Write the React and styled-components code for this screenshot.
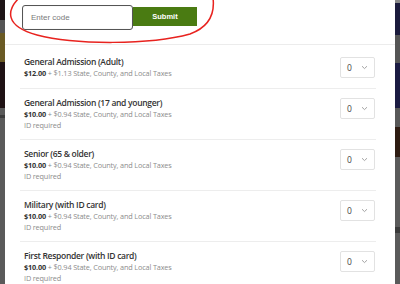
import styled, { createGlobalStyle } from "styled-components";

const GlobalStyle = createGlobalStyle`
  html, body {
    margin: 0;
    padding: 0;
    width: 400px;
    height: 284px;
    overflow: hidden;
    font-family: "Open Sans", "Liberation Sans", sans-serif;
  }
`;

const Page = styled.div`
  display: flex;
  width: 400px;
  height: 284px;
  background: #585858;
`;

const Backdrop = styled.div`
  width: 5px;
  flex-shrink: 0;
  background: ${(p) => p.$bands};
`;

const Modal = styled.div`
  position: relative;
  flex: 1;
  background: #fff;
  overflow: hidden;
`;

const CodeBar = styled.div`
  display: flex;
  align-items: flex-start;
  height: 39px;
  padding: 5px 0 0 17px;
  border-bottom: 1px solid #ececec;
`;

const CodeInput = styled.div`
  box-sizing: border-box;
  width: 111px;
  height: 25px;
  border: 1.5px solid #555;
  border-radius: 3px;
  display: flex;
  align-items: center;
  padding-left: 8px;
  font-family: "Liberation Sans", Arial, sans-serif;
  font-size: 8px;
  color: #7a7a7a;
  box-shadow: inset 0 0 1px rgba(0, 0, 0, 0.2);
`;

const SubmitButton = styled.div`
  width: 64px;
  height: 19px;
  margin-top: 2px;
  background: #4a7b12;
  color: #fff;
  font-family: "Liberation Sans", Arial, sans-serif;
  font-size: 7.5px;
  font-weight: 700;
  display: flex;
  align-items: center;
  justify-content: center;
`;

const Annotation = styled.svg`
  position: absolute;
  left: 0;
  top: 0;
  pointer-events: none;
`;

const List = styled.div`
  margin: 0 19px 0 15px;
  padding-top: 3px;
`;

const Row = styled.div`
  display: flex;
  align-items: flex-start;
  justify-content: space-between;
  padding: 7px 1px 9px 4px;
  border-bottom: 1px solid #ededed;
`;

const Info = styled.div`
  display: flex;
  flex-direction: column;
`;

const Title = styled.div`
  font-size: 8.5px;
  font-weight: 600;
  letter-spacing: -0.3px;
  color: #333;
  line-height: 13px;
`;

const Price = styled.div`
  font-size: 7.3px;
  letter-spacing: -0.15px;
  color: #8c8c8c;
  line-height: 11px;

  b {
    color: #333;
    font-weight: 700;
  }
`;

const Note = styled.div`
  font-size: 7.3px;
  letter-spacing: -0.15px;
  color: #8c8c8c;
  line-height: 10px;
`;

const Select = styled.div`
  box-sizing: border-box;
  width: 35px;
  height: 21px;
  margin-top: 2px;
  border: 1px solid #e2e2e2;
  border-radius: 2px;
  display: flex;
  align-items: center;
  justify-content: space-between;
  padding: 0 6px;
  font-size: 8.5px;
  color: #444;
`;

const tickets = [
  { name: "General Admission (Adult)", price: "$12.00", tax: "$1.13", id: false },
  { name: "General Admission (17 and younger)", price: "$10.00", tax: "$0.94", id: true },
  { name: "Senior (65 & older)", price: "$10.00", tax: "$0.94", id: true },
  { name: "Military (with ID card)", price: "$10.00", tax: "$0.94", id: true },
  { name: "First Responder (with ID card)", price: "$10.00", tax: "$0.94", id: true },
];

const leftBands = `linear-gradient(to bottom,
  #1e1416 0 20px, #555 20px 33px, #6a5a24 33px 62px, #1f1214 62px 108px,
  #5a5a5a 108px 115px, #3c3c3c 115px 118px, #5a5a5a 118px 284px)`;

const rightBands = `linear-gradient(to bottom,
  #8a8a8a 0 3px, #1b1b3c 3px 35px, #555 35px 63px, #1b1b42 63px 108px,
  #585858 108px 127px, #2e1c12 127px 157px, #5a5a5a 157px 227px,
  #3a3a3a 227px 233px, #5a5a5a 233px 284px)`;

const Chevron = () => (
  <svg width="7" height="5" viewBox="0 0 7 5">
    <path d="M1 1.2 L3.5 3.6 L6 1.2" fill="none" stroke="#9a9a9a" strokeWidth="0.9" />
  </svg>
);

const App = () => {
  return (
    <Page>
      <GlobalStyle />
      <Backdrop $bands={leftBands} />
      <Modal>
        <CodeBar>
          <CodeInput>Enter code</CodeInput>
          <SubmitButton>Submit</SubmitButton>
        </CodeBar>
        <List>
          {tickets.map((t) => (
            <Row key={t.name}>
              <Info>
                <Title>{t.name}</Title>
                <Price>
                  <b>{t.price}</b> + {t.tax} State, County, and Local Taxes
                </Price>
                {t.id && <Note>ID required</Note>}
              </Info>
              <Select>
                <span>0</span>
                <Chevron />
              </Select>
            </Row>
          ))}
        </List>
        <Annotation width="390" height="60" viewBox="0 0 390 60">
          <path
            d="M14 -2 C 2 10, -1 26, 32 35 C 70 45, 145 45, 185 34 C 204 27, 210 14, 208 -2"
            fill="none"
            stroke="#e8231f"
            strokeWidth="1.5"
          />
        </Annotation>
      </Modal>
      <Backdrop $bands={rightBands} />
    </Page>
  );
};

export default App;
